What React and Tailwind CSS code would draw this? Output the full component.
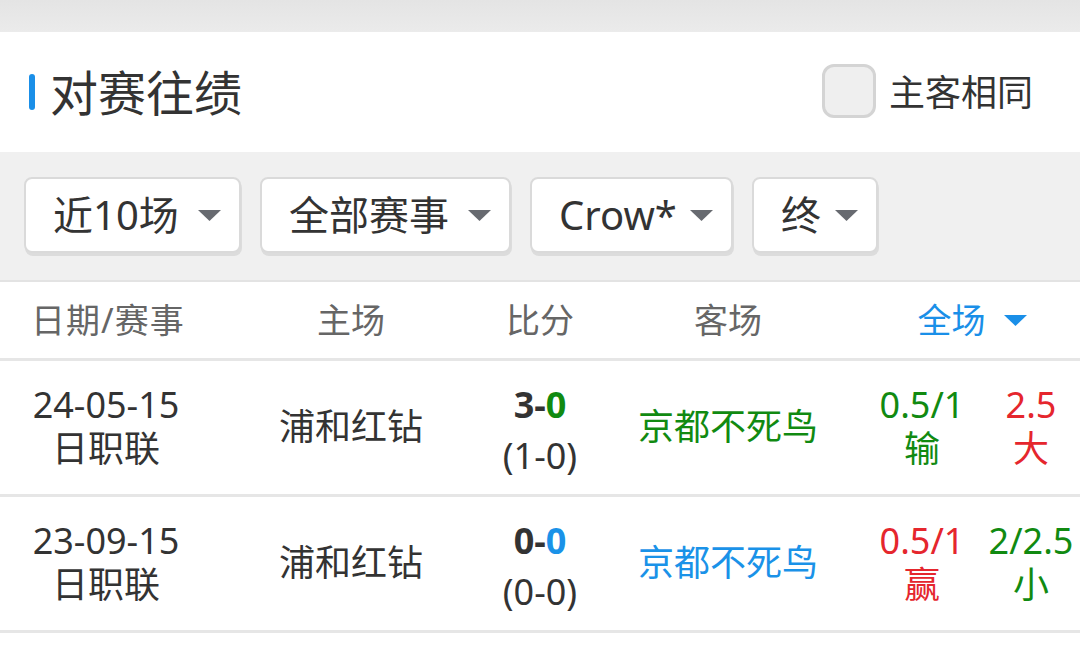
import React from "react";

const FONT = { fontFamily: '"Noto Sans", "Noto Sans CJK SC", sans-serif' };

function Caret({ className }) {
  return (
    <svg width="23" height="11" viewBox="0 0 23 11" className={className}>
      <polygon points="0,0 23,0 11.5,11" fill="currentColor" />
    </svg>
  );
}

function FilterButton({ label, w }) {
  return (
    <div
      className={`flex items-center justify-between h-[76px] pl-[27px] pr-[18px] bg-white border-2 border-[#dadada] rounded-[8px] shadow-[1px_3px_0_#dcdcdc] ${w}`}
    >
      <span className="text-[40px] leading-none text-[#333]">{label}</span>
      <Caret className="text-[#676a70]" />
    </div>
  );
}

const rows = [
  {
    date: "24-05-15",
    league: "日职联",
    home: "浦和红钻",
    sh: "3",
    sa: "0",
    saColor: "text-[#118a11]",
    half: "(1-0)",
    away: "京都不死鸟",
    awayColor: "text-[#118a11]",
    hc: "0.5/1",
    hcRes: "输",
    hcColor: "text-[#118a11]",
    ou: "2.5",
    ouRes: "大",
    ouColor: "text-[#e5262d]",
  },
  {
    date: "23-09-15",
    league: "日职联",
    home: "浦和红钻",
    sh: "0",
    sa: "0",
    saColor: "text-[#1a92e8]",
    half: "(0-0)",
    away: "京都不死鸟",
    awayColor: "text-[#1a92e8]",
    hc: "0.5/1",
    hcRes: "赢",
    hcColor: "text-[#e5262d]",
    ou: "2/2.5",
    ouRes: "小",
    ouColor: "text-[#118a11]",
  },
];

export default function App() {
  return (
    <div style={FONT} className="w-[1080px] h-[650px] overflow-hidden bg-white">
      {/* top band */}
      <div className="h-[32px] bg-gradient-to-b from-[#e4e4e4] to-[#ebebeb]" />

      {/* title */}
      <div className="h-[120px] flex items-center justify-between pl-[29px] pr-[47px]">
        <div className="flex items-center gap-[15px]">
          <div className="w-[6px] h-[36px] rounded-full bg-[#1a8fe8]" />
          <span className="text-[48px] leading-none text-[#333] mt-[2px]">对赛往绩</span>
        </div>
        <div className="flex items-center gap-[13px] -mt-[2px]">
          <div className="w-[54px] h-[54px] rounded-[12px] border-[3px] border-[#d4d4d4] bg-[#efefef]" />
          <span className="text-[36px] leading-none text-[#333] mt-[4px]">主客相同</span>
        </div>
      </div>

      {/* filters */}
      <div className="h-[130px] bg-[#f0f0f0] border-b-2 border-[#e3e3e3] flex items-start gap-[19px] pl-[24px] pt-[25px]">
        <FilterButton label="近10场" w="w-[217px]" />
        <FilterButton label="全部赛事" w="w-[251px]" />
        <FilterButton label="Crow*" w="w-[203px]" />
        <FilterButton label="终" w="w-[126px]" />
      </div>

      {/* header */}
      <div className="h-[79px] grid grid-cols-[216px_270px_108px_268px_218px] items-center border-b-[3px] border-[#e6e6e6] text-[34px] leading-none text-[#666]">
        <div className="pl-[31px] tracking-[1px]">日期/赛事</div>
        <div className="text-center">主场</div>
        <div className="text-center">比分</div>
        <div className="text-center">客场</div>
        <div className="flex items-center justify-center gap-[18px] text-[#1a8fe8] pl-[2px]">
          <span>全场</span>
          <Caret className="text-[#1a8fe8] mt-[1px]" />
        </div>
      </div>

      {/* rows */}
      {rows.map((r, i) => (
        <div
          key={i}
          className="h-[136px] grid grid-cols-[216px_270px_108px_268px_120px_98px] items-center border-b-[3px] border-[#e6e6e6] text-[36px] text-[#333]"
        >
          <div className="flex flex-col items-center leading-[44px] pr-[4px] pb-[2px]">
            <span>{r.date}</span>
            <span>{r.league}</span>
          </div>
          <div className="text-center leading-none pb-[2px]">{r.home}</div>
          <div className="flex flex-col items-center pt-[12px]">
            <span className="text-[36px] font-bold leading-[44px]">
              {r.sh}-<span className={r.saColor}>{r.sa}</span>
            </span>
            <span className="leading-[58px]">{r.half}</span>
          </div>
          <div className={`text-center leading-none pb-[2px] ${r.awayColor}`}>{r.away}</div>
          <div className={`flex flex-col items-center leading-[44px] pb-[2px] ${r.hcColor}`}>
            <span>{r.hc}</span>
            <span>{r.hcRes}</span>
          </div>
          <div className={`flex flex-col items-center leading-[44px] pb-[2px] ${r.ouColor}`}>
            <span>{r.ou}</span>
            <span>{r.ouRes}</span>
          </div>
        </div>
      ))}
    </div>
  );
}
